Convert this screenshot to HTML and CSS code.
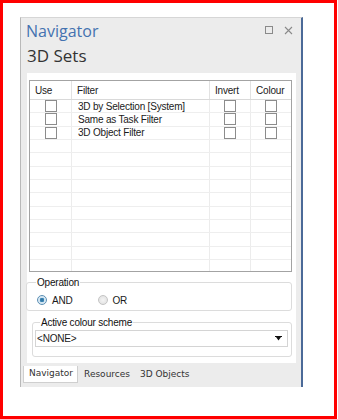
FILE: index.html
```html
<!DOCTYPE html>
<html>
<head>
<meta charset="utf-8">
<link rel="stylesheet" href="styles.css">
</head>
<body>
<div class="frame">
  <div class="panel">
    <div class="titlebar">
      <span class="title">Navigator</span>
      <span class="controls">
        <svg class="ico" width="9" height="9" viewBox="0 0 9 9"><rect x="0.5" y="0.5" width="7" height="7" fill="none" stroke="#8a8a8a" stroke-width="1"/></svg>
        <svg class="ico" width="9" height="9" viewBox="0 0 9 9"><path d="M1 1 L8 8 M8 1 L1 8" stroke="#8a8a8a" stroke-width="1.1"/></svg>
      </span>
    </div>
    <div class="heading">3D Sets</div>
    <div class="content">
      <div class="grid">
        <div class="row head">
          <div class="c c1">Use</div>
          <div class="c c2">Filter</div>
          <div class="c c3">Invert</div>
          <div class="c c4">Colour</div>
        </div>
        <div class="body">
          <div class="row"><div class="c c1"><span class="cb"></span></div><div class="c c2">3D by Selection [System]</div><div class="c c3"><span class="cb"></span></div><div class="c c4"><span class="cb"></span></div></div>
          <div class="row"><div class="c c1"><span class="cb"></span></div><div class="c c2">Same as Task Filter</div><div class="c c3"><span class="cb"></span></div><div class="c c4"><span class="cb"></span></div></div>
          <div class="row"><div class="c c1"><span class="cb"></span></div><div class="c c2">3D Object Filter</div><div class="c c3"><span class="cb"></span></div><div class="c c4"><span class="cb"></span></div></div>
          <div class="row"><div class="c c1"></div><div class="c c2"></div><div class="c c3"></div><div class="c c4"></div></div>
          <div class="row"><div class="c c1"></div><div class="c c2"></div><div class="c c3"></div><div class="c c4"></div></div>
          <div class="row"><div class="c c1"></div><div class="c c2"></div><div class="c c3"></div><div class="c c4"></div></div>
          <div class="row"><div class="c c1"></div><div class="c c2"></div><div class="c c3"></div><div class="c c4"></div></div>
          <div class="row"><div class="c c1"></div><div class="c c2"></div><div class="c c3"></div><div class="c c4"></div></div>
          <div class="row"><div class="c c1"></div><div class="c c2"></div><div class="c c3"></div><div class="c c4"></div></div>
          <div class="row"><div class="c c1"></div><div class="c c2"></div><div class="c c3"></div><div class="c c4"></div></div>
          <div class="row"><div class="c c1"></div><div class="c c2"></div><div class="c c3"></div><div class="c c4"></div></div>
          <div class="row"><div class="c c1"></div><div class="c c2"></div><div class="c c3"></div><div class="c c4"></div></div>
          <div class="row"><div class="c c1"></div><div class="c c2"></div><div class="c c3"></div><div class="c c4"></div></div>
        </div>
      </div>
      <fieldset class="group op">
        <legend>Operation</legend>
        <div class="radios">
          <label class="radio"><span class="dot on"></span>AND</label>
          <label class="radio"><span class="dot"></span>OR</label>
        </div>
      </fieldset>
      <fieldset class="group scheme">
        <legend>Active colour scheme</legend>
        <div class="combo">
          <span>&lt;NONE&gt;</span>
          <svg width="7" height="5" viewBox="0 0 7 5"><path d="M0 0 H7 V1 H0 Z M1 1 H6 L3.5 4.5 Z" fill="#111"/></svg>
        </div>
      </fieldset>
    </div>
    <div class="tabs">
      <span class="tab active">Navigator</span>
      <span class="tab">Resources</span>
      <span class="tab">3D Objects</span>
    </div>
  </div>
</div>
</body>
</html>
```

FILE: styles.css
```css
html, body {
  margin: 0;
  padding: 0;
  background: #fff;
}
.frame {
  width: 337px;
  height: 419px;
  box-sizing: border-box;
  border: 3px solid #f00;
  padding: 14px 0 0 17px;
  background: #fff;
}
.panel {
  width: 283px;
  height: 370px;
  box-sizing: border-box;
  background: #ececec;
  border-left: 1px solid #b9b9b9;
  border-top: 1px solid #d6d6d6;
  border-right: 2px solid #4b6a98;
  display: flex;
  flex-direction: column;
}
.titlebar {
  height: 25px;
  display: flex;
  align-items: center;
  justify-content: space-between;
  padding: 0 8px 0 5px;
}
.title {
  font-family: "Open Sans", sans-serif;
  font-size: 16px;
  color: #4472b0;
  line-height: 20px;
}
.controls {
  display: flex;
  gap: 10px;
  align-items: center;
}
.ico { display: block; }
.heading {
  height: 30px;
  padding-left: 6px;
  font-family: "Open Sans", sans-serif;
  font-size: 17px;
  color: #333;
  line-height: 26px;
}
.content {
  margin: 0 5px 0 6px;
  background: #fff;
  padding: 7px 4px 0 2px;
  height: 290px;
  box-sizing: border-box;
  font-family: "Liberation Sans", Arial, sans-serif;
  font-size: 10px;
  letter-spacing: -0.2px;
  color: #1a1a1a;
}
.grid {
  border: 1px solid #a3a3a3;
  height: 192px;
  box-sizing: border-box;
  display: flex;
  flex-direction: column;
  overflow: hidden;
}
.row {
  display: flex;
  height: 13.333px;
  box-sizing: border-box;
  border-bottom: 1px solid #eeeeee;
}
.row.head {
  height: 19px;
  border-bottom: 1px solid #d9d9d9;
  align-items: stretch;
}
.c {
  box-sizing: border-box;
  display: flex;
  align-items: center;
  border-right: 1px solid #ececec;
  white-space: nowrap;
}
.head .c { border-right-color: #e2e2e2; padding-left: 5px; }
.c1 { width: 42px; justify-content: center; }
.c2 { width: 138px; padding-left: 6px; }
.c3 { width: 41px; justify-content: center; }
.c4 { width: 40px; justify-content: center; border-right: none; }
.head .c1, .head .c3, .head .c4 { justify-content: flex-start; }
.body { flex: 1; overflow: hidden; }
.cb {
  width: 12px;
  height: 12px;
  box-sizing: border-box;
  border: 1px solid #8c8c8c;
  background: #fff;
  display: block;
}
.group {
  margin: 0;
  border: 1px solid #dcdcdc;
  border-radius: 3px;
  padding: 0;
}
.group legend {
  padding: 0 1px;
  margin-left: 9px;
  color: #111;
}
.op {
  margin: 5px 0 0 -3px;
  height: 34px;
  box-sizing: border-box;
}
.radios {
  display: flex;
  align-items: center;
  height: 24px;
  padding-left: 10px;
  gap: 25px;
}
.radio {
  display: flex;
  align-items: center;
  gap: 5px;
}
.dot {
  width: 10px;
  height: 10px;
  box-sizing: border-box;
  border-radius: 50%;
  border: 1px solid #c4c4c4;
  background: radial-gradient(circle, #f4f4f4 0, #dedede 100%);
  display: block;
}
.dot.on {
  border-color: #5b8fb4;
  background: radial-gradient(circle, #2a6e9e 0, #3f88b6 35%, #cfe3f0 45%, #eef5fa 100%);
}
.scheme {
  margin: 6px 0 0 3px;
  height: 40px;
  box-sizing: border-box;
  padding: 0 3px 0 2px;
}
.scheme legend { margin-left: 5px; }
.combo {
  margin-top: 2px;
  height: 17px;
  box-sizing: border-box;
  border: 1px solid #d4d4d4;
  display: flex;
  align-items: center;
  justify-content: space-between;
  padding: 0 5px 0 1px;
  background: #fff;
}
.combo svg { display: block; }
.tabs {
  flex: 1;
  display: flex;
  align-items: flex-start;
  padding: 3px 0 0 2px;
  font-family: "DejaVu Sans", sans-serif;
  font-size: 9px;
  color: #333;
}
.tab {
  height: 17px;
  line-height: 17px;
  padding: 0 4px;
  margin-right: 2px;
  box-sizing: border-box;
}
.tab.active {
  background: #fff;
  border: 1px solid #cfcfcf;
  border-top: none;
  line-height: 15px;
  padding: 0 4px 0 5px;
}
```
